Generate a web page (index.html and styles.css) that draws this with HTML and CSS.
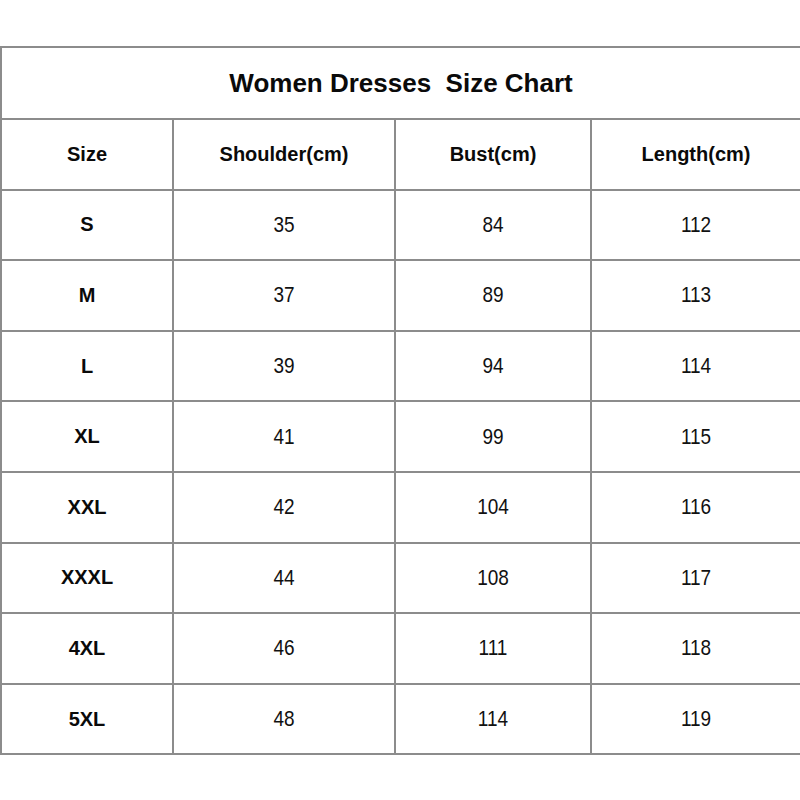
FILE: index.html
```html
<!DOCTYPE html>
<html>
<head>
<meta charset="utf-8">
<link rel="stylesheet" href="styles.css">
</head>
<body>
<table class="chart">
  <colgroup>
    <col class="c1"><col class="c2"><col class="c3"><col class="c4">
  </colgroup>
  <tr class="title-row"><th colspan="4" class="title">Women Dresses&nbsp; Size Chart</th></tr>
  <tr class="row"><th>Size</th><th>Shoulder(cm)</th><th>Bust(cm)</th><th>Length(cm)</th></tr>
  <tr class="row"><th>S</th><td><span class="num">35</span></td><td><span class="num">84</span></td><td><span class="num">112</span></td></tr>
  <tr class="row"><th>M</th><td><span class="num">37</span></td><td><span class="num">89</span></td><td><span class="num">113</span></td></tr>
  <tr class="row"><th>L</th><td><span class="num">39</span></td><td><span class="num">94</span></td><td><span class="num">114</span></td></tr>
  <tr class="row"><th>XL</th><td><span class="num">41</span></td><td><span class="num">99</span></td><td><span class="num">115</span></td></tr>
  <tr class="row"><th>XXL</th><td><span class="num">42</span></td><td><span class="num">104</span></td><td><span class="num">116</span></td></tr>
  <tr class="row"><th>XXXL</th><td><span class="num">44</span></td><td><span class="num">108</span></td><td><span class="num">117</span></td></tr>
  <tr class="row"><th>4XL</th><td><span class="num">46</span></td><td><span class="num">111</span></td><td><span class="num">118</span></td></tr>
  <tr class="row"><th>5XL</th><td><span class="num">48</span></td><td><span class="num">114</span></td><td><span class="num">119</span></td></tr>
</table>
</body>
</html>
```

FILE: styles.css
```css
html, body {
  margin: 0;
  padding: 0;
  background: #ffffff;
}
body {
  padding-top: 46px;
  font-family: "Liberation Sans", Arial, sans-serif;
  color: #111;
}
.chart {
  border-collapse: collapse;
  width: 800px;
  table-layout: fixed;
}
.c1 { width: 172px; }
.c2 { width: 222px; }
.c3 { width: 196px; }
.c4 { width: 210px; }
.chart th, .chart td {
  border: 2px solid #8c8c8c;
  text-align: center;
  vertical-align: middle;
  padding: 0;
}
.title-row { height: 72px; }
.title {
  font-size: 26px;
  font-weight: bold;
  color: #0a0a0a;
}
.row { height: 70.6px; }
.row th {
  font-size: 20px;
  font-weight: bold;
  color: #0a0a0a;
}
.row td {
  font-size: 19px;
  font-weight: normal;
}
.num {
  display: inline-block;
  transform: scaleY(1.18);
}
```
